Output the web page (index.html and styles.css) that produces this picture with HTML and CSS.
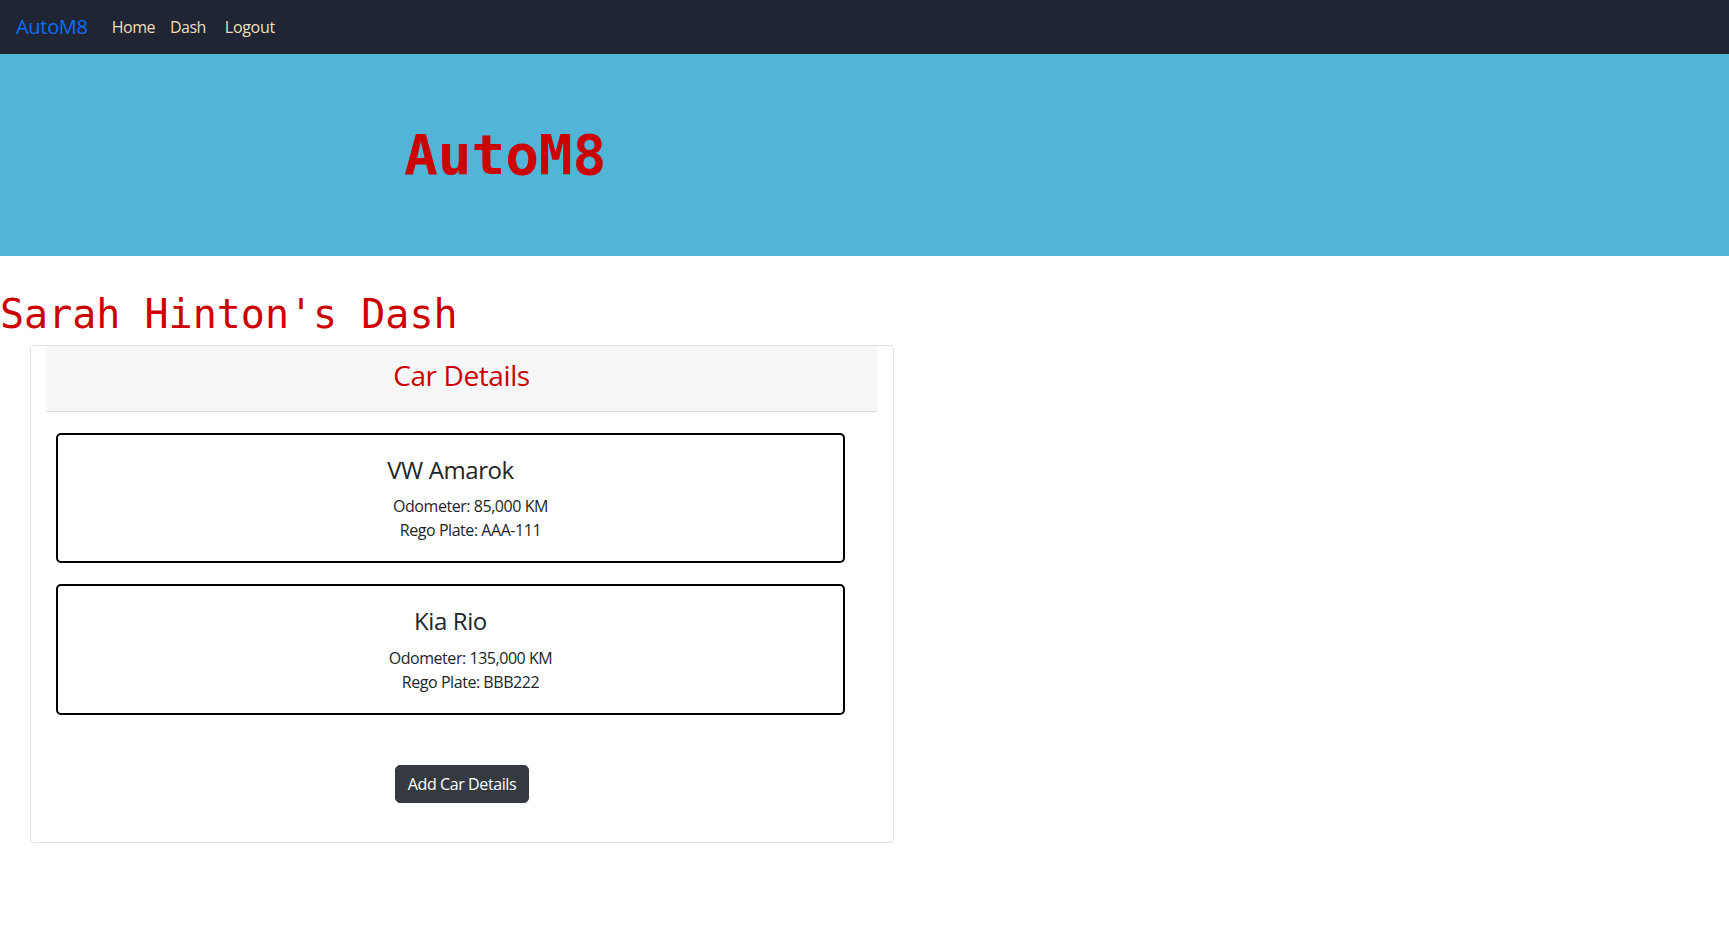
FILE: index.html
```html
<!DOCTYPE html>
<html lang="en">
<head>
<meta charset="utf-8">
<title>AutoM8 - Dash</title>
<link rel="stylesheet" href="styles.css">
</head>
<body>
  <nav class="navbar">
    <a class="brand" href="#">AutoM8</a>
    <ul class="nav-links">
      <li><a href="#">Home</a></li>
      <li><a href="#">Dash</a></li>
      <li><a href="#">Logout</a></li>
    </ul>
  </nav>

  <header class="hero">
    <h1 class="hero-title">AutoM8</h1>
  </header>

  <main>
    <h1 class="dash-title">Sarah Hinton's Dash</h1>

    <section class="panel">
      <div class="panel-inner">
        <div class="panel-header">
          <h3>Car Details</h3>
        </div>

        <div class="car-list">
          <div class="car-card">
            <h4>VW Amarok</h4>
            <ul>
              <li>Odometer: 85,000 KM</li>
              <li>Rego Plate: AAA-111</li>
            </ul>
          </div>
          <div class="car-card">
            <h4>Kia Rio</h4>
            <ul>
              <li>Odometer: 135,000 KM</li>
              <li>Rego Plate: BBB222</li>
            </ul>
          </div>
        </div>
      </div>

      <div class="actions">
        <button class="btn-dark" type="button">Add Car Details</button>
      </div>
    </section>
  </main>
</body>
</html>
```

FILE: styles.css
```css
* {
  box-sizing: border-box;
}

body {
  margin: 0;
  font-family: "Open Sans", "Noto Sans", Arial, sans-serif;
  font-size: 16px;
  line-height: 1.5;
  color: #212529;
  background: #ffffff;
}

/* Navbar */
.navbar {
  height: 54px;
  background: #1f2533;
  display: flex;
  align-items: center;
  padding: 0 16px;
}

.brand {
  font-size: 20px;
  color: #0d6efd;
  text-decoration: none;
  margin-right: 16px;
  letter-spacing: -0.3px;
}

.nav-links {
  list-style: none;
  margin: 0;
  padding: 0;
  display: flex;
}

.nav-links a {
  display: block;
  padding: 8px 7px 8px 8px;
  color: #f5deb3;
  text-decoration: none;
  letter-spacing: -0.5px;
}

.nav-links li:last-child a {
  padding-left: 12px;
  letter-spacing: -0.3px;
}

/* Hero */
.hero {
  height: 202px;
  background: #52b5d7;
  display: flex;
  align-items: center;
  padding-left: 404px;
}

.hero-title {
  margin: 0;
  font-family: "DejaVu Sans Mono", monospace;
  font-weight: bold;
  font-size: 56px;
  line-height: 1.2;
  color: #cc0000;
}

/* Dash */
.dash-title {
  margin: 34px 0 7px;
  font-family: "DejaVu Sans Mono", monospace;
  font-weight: normal;
  font-size: 40px;
  line-height: 1.2;
  color: #cc0000;
}

.panel {
  width: 864px;
  margin-left: 30px;
  border: 1px solid #dfe2e6;
  border-radius: 4px;
  padding-bottom: 39px;
}

.panel-inner {
  padding: 0 16px 0 15px;
}

.panel-header {
  background: #f7f7f7;
  border-bottom: 1px solid #dcdcdc;
  padding: 13px 0 18px;
  text-align: center;
}

.panel-header h3 {
  margin: 0;
  font-size: 28px;
  font-weight: normal;
  line-height: 1.2;
  color: #cc0000;
  letter-spacing: -0.4px;
}

.car-list {
  display: flex;
  flex-direction: column;
  gap: 21px;
  margin: 21px 32px 0 10px;
}

.car-card {
  border: 2px solid #000;
  border-radius: 5px;
  padding: 21px 16px 19px;
  text-align: center;
}

.car-card h4 {
  margin: 0 0 10px;
  font-size: 24px;
  font-weight: normal;
  line-height: 1.2;
  letter-spacing: -0.4px;
}

.car-card ul {
  list-style: none;
  margin: 0;
  padding-left: 40px;
  font-size: 16px;
  line-height: 24px;
  letter-spacing: -0.45px;
}

.actions {
  display: flex;
  justify-content: center;
  margin-top: 50px;
}

.btn-dark {
  font-family: inherit;
  font-size: 16px;
  line-height: 24px;
  padding: 6px 12px;
  color: #ffffff;
  background: #343a40;
  border: 1px solid #343a40;
  border-radius: 5px;
  letter-spacing: -0.4px;
  cursor: pointer;
}
```
